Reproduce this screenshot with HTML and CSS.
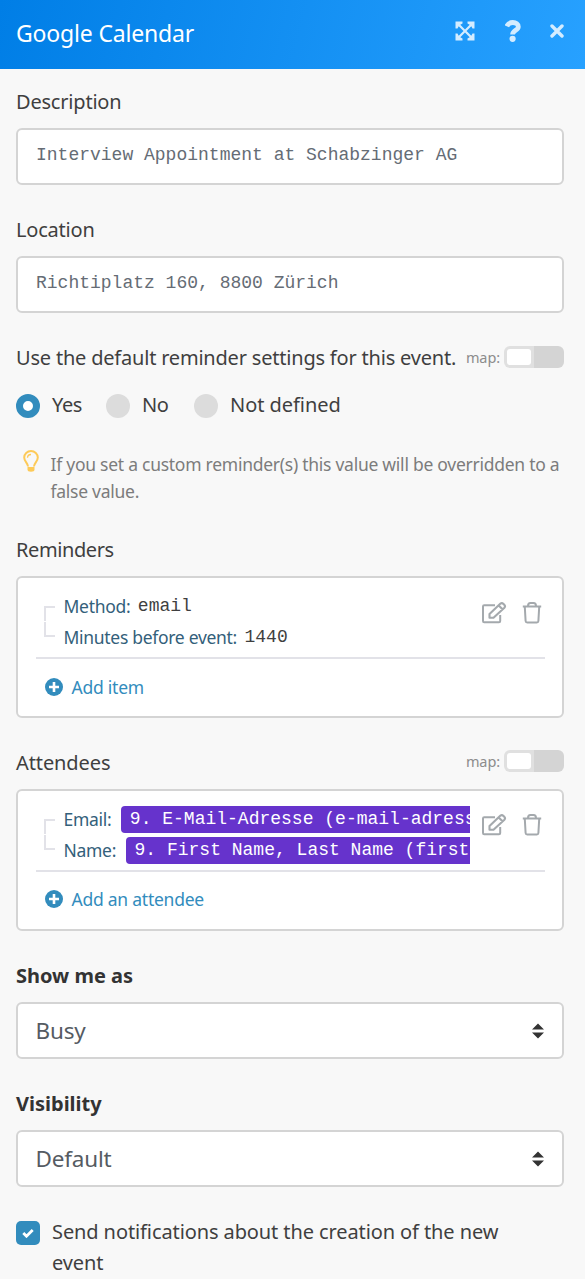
FILE: index.html
```html
<!DOCTYPE html>
<html lang="en">
<head>
<meta charset="utf-8">
<title>Google Calendar</title>
<link rel="stylesheet" href="styles.css">
</head>
<body>
<svg class="defs" width="0" height="0" aria-hidden="true">
  <symbol id="edit" viewBox="0 0 26 24">
    <path d="M14 4.200H3.200Q2 4.200 2 5.400V20Q2 21.200 3.200 21.200H18Q19.200 21.200 19.200 20V14" fill="none" stroke="currentColor" stroke-width="2"/>
    <path d="M8.500 16.800V13L19.500 2.600Q21 1.500 22.500 3L23.300 3.800Q24.700 5.300 23.400 6.700L12.500 16.800Z M17.700 4.500L21.500 8.300" fill="none" stroke="currentColor" stroke-width="2.100" stroke-linejoin="round"/>
  </symbol>
  <symbol id="trash" viewBox="0 0 20 24">
    <path d="M.8 5.500H19.200M6 5Q6 2 8.500 2H11.500Q14 2 14 5M2.800 6L3.600 20Q3.700 21.500 5.200 21.500H14.800Q16.300 21.500 16.400 20L17.200 6" fill="none" stroke="currentColor" stroke-width="2"/>
  </symbol>
  <symbol id="plus" viewBox="0 0 18 18">
    <circle cx="9" cy="9" r="9" fill="currentColor"/>
    <path d="M9 4V14M4 9H14" stroke="#fff" stroke-width="2.600"/>
  </symbol>
  <symbol id="sort" viewBox="0 0 12 16">
    <path d="M6 .5L12 6.500H0ZM6 15.500L0 9.500H12Z" fill="#333"/>
  </symbol>
</svg>
<header class="header">
  <h1 class="title">Google Calendar</h1>
  <div class="actions">
    <svg class="expand" viewBox="0 0 20 20"><path d="M.5 .5H7.500V2.500L5.300 3.700L10 8.500L14.700 3.700L12.500 2.500V.5H19.500V7.500H17.500L16.300 5.300L11.500 10L16.300 14.700L17.500 12.500H19.500V19.500H12.500V17.500L14.700 16.300L10 11.500L5.300 16.300L7.500 17.500V19.500H.5V12.500H2.500L3.700 14.700L8.500 10L3.700 5.300L2.500 7.500H.5Z" fill="currentColor"/></svg>
    <svg class="help" viewBox="0 0 16 22"><path d="M1.800 6.300C2.900 3.700 5 2.500 7.900 2.500C11 2.500 13.300 4.200 13.300 6.700C13.300 10.300 7.600 10.300 7.600 14.500" fill="none" stroke="currentColor" stroke-width="4.800"/><circle cx="7.600" cy="18.800" r="3.100" fill="currentColor"/></svg>
    <svg class="close" viewBox="0 0 14 14"><path d="M2 2L12 12M12 2L2 12" stroke="currentColor" stroke-width="3.400" stroke-linecap="round"/></svg>
  </div>
</header>
<main class="form">
  <section class="field">
    <div class="label"><span class="t-description">Description</span></div>
    <div class="box input">Interview Appointment at Schabzinger AG</div>
  </section>
  <section class="field">
    <div class="label"><span class="t-location">Location</span></div>
    <div class="box input">Richtiplatz 160, 8800 Zürich</div>
  </section>
  <section class="reminder-default">
    <div class="label"><span class="t-use">Use the default reminder settings for this event.</span><span class="map"><span class="t-map">map:</span><i class="toggle"></i></span></div>
    <div class="radios">
      <span class="radio on"></span><span class="radio-text yes">Yes</span>
      <span class="radio"></span><span class="radio-text no">No</span>
      <span class="radio"></span><span class="radio-text nd">Not defined</span>
    </div>
    <div class="hint">
      <svg class="bulb" viewBox="0 0 16 22"><path d="M5 16.500C5 13 1.200 11.500 1.200 7.500A6.800 6.500 0 0 1 14.800 7.500C14.800 11.500 11 13 11 16.500" fill="none" stroke="currentColor" stroke-width="2"/><path d="M4.500 7.800Q4.600 4.700 8 4.500" fill="none" stroke="currentColor" stroke-width="1.300"/><path d="M4.500 17H11.500V19.500Q11.500 21.700 8 21.700T4.500 19.500Z" fill="currentColor"/></svg>
      <p class="hint-text">If you set a custom reminder(s) this value will be overridden to a<br>false value.</p>
    </div>
  </section>
  <section class="field">
    <div class="label"><span class="t-reminders">Reminders</span></div>
    <div class="box list">
      <div class="item">
        <div class="rows">
          <div class="row first"><i class="branch"></i><span class="key t-method">Method:</span><span class="value">email</span></div>
          <div class="row last"><i class="branch"></i><span class="key t-minutes">Minutes before event:</span><span class="value">1440</span></div>
        </div>
        <div class="tools"><svg class="edit"><use href="#edit"/></svg><svg class="trash"><use href="#trash"/></svg></div>
      </div>
      <div class="add"><svg class="plus"><use href="#plus"/></svg><span class="t-additem">Add item</span></div>
    </div>
  </section>
  <section class="field attendees">
    <div class="label"><span class="t-attendees">Attendees</span><span class="map"><span class="t-map">map:</span><i class="toggle"></i></span></div>
    <div class="box list">
      <div class="item">
        <div class="rows">
          <div class="row first"><i class="branch"></i><span class="key t-email">Email:</span><span class="chip">9. E-Mail-Adresse (e-mail-adresse)</span></div>
          <div class="row last"><i class="branch"></i><span class="key t-name">Name:</span><span class="chip">9. First Name, Last Name (first name)</span></div>
        </div>
        <div class="tools"><svg class="edit"><use href="#edit"/></svg><svg class="trash"><use href="#trash"/></svg></div>
      </div>
      <div class="add"><svg class="plus"><use href="#plus"/></svg><span class="t-addatt">Add an attendee</span></div>
    </div>
  </section>
  <section class="field">
    <div class="label strong"><span class="t-show">Show me as</span></div>
    <div class="box select"><span class="t-busy">Busy</span><svg class="sort"><use href="#sort"/></svg></div>
  </section>
  <section class="field">
    <div class="label strong"><span class="t-vis">Visibility</span></div>
    <div class="box select"><span class="t-default">Default</span><svg class="sort"><use href="#sort"/></svg></div>
  </section>
  <section class="notify">
    <span class="checkbox"><svg viewBox="0 0 12 10"><path d="M1.300 5L4.500 8.200L10.700 2" fill="none" stroke="#fff" stroke-width="2.800"/></svg></span>
    <p class="notify-text">Send notifications about the creation of the new<br>event</p>
  </section>
</main>
</body>
</html>
```
FILE: styles.css
```css
* { box-sizing: border-box; }
body { margin: 0; background: #f8f8f8; color: #3f3f3f; font: 20px/30px "Noto Sans", sans-serif; white-space: nowrap; }
h1, p { margin: 0; font-weight: inherit; font-size: inherit; }
svg { display: block; flex: none; }
.defs { position: absolute; }
.header { height: 69px; padding: 0 21px 0 16px; display: flex; justify-content: space-between; background: linear-gradient(105deg, #007ee6, #27a1ff); color: #fff; }
.title { font-size: 23px; line-height: 67px; letter-spacing: -0.17px; }
.actions { display: flex; align-items: center; height: 62px; color: #d4ecff; }
.expand { width: 20px; height: 20px; margin-right: 30px; }
.help { width: 16px; height: 22px; margin-right: 29px; }
.close { width: 14px; height: 14px; }
.form { height: 1210px; overflow: hidden; padding: 18px 21px 0 16px; }
.field { margin-bottom: 30px; }
.label { height: 30px; margin-bottom: 11px; display: flex; justify-content: space-between; letter-spacing: -0.2px; }
.radio-text { letter-spacing: -0.4px; }
.radio-text.nd { letter-spacing: -0.05px; }
.t-reminders { letter-spacing: -0.4px; }
.t-attendees { letter-spacing: -0.1px; }
.strong { font-weight: 700; color: #333; letter-spacing: 0; }
.box { background: #fff; border: 2px solid #d4d4d4; border-radius: 6px; }
.input { height: 57px; padding: 0 18px; color: #656c75; font: 18px/50px "Liberation Mono", monospace; }
.map { height: 28px; display: flex; align-items: center; font-size: 14.500px; color: #8c8c8c; letter-spacing: -0.1px; }
.attendees .map { height: 26px; }
.toggle { width: 60px; height: 22px; margin-left: 4px; padding: 3px; border-radius: 6px; background: linear-gradient(90deg, #e0e0e0 30px, #d4d4d4 30px); }
.toggle::before { content: ""; display: block; width: 24px; height: 16px; border-radius: 3px; background: #fff; }
.radios { height: 24px; margin: 21px 0 33px; display: flex; align-items: center; }
.radio { width: 24px; height: 24px; margin-right: 12px; border-radius: 50%; background: #dcdcdc; }
.radio.on { border: 7.500px solid #328cbd; background: #fff; }
.radio-text { line-height: 24px; padding-bottom: 2px; }
.yes { width: 54px; }
.no { width: 52px; }
.hint { display: flex; margin-bottom: 30px; }
.bulb { width: 16px; height: 22px; margin: -1px 11.500px 0 7px; color: #fdca58; }
.hint-text { font-size: 17.500px; line-height: 27px; color: #7c7c7c; letter-spacing: -0.26px; }
.list { height: 142px; padding: 13px 17px 0 18px; }
.item { height: 68px; border-bottom: 2px solid #e2e2e8; display: flex; justify-content: space-between; }
.rows { width: 434px; overflow: hidden; }
.row { height: 31px; display: flex; align-items: center; }
.branch { width: 11px; height: 15px; margin: 0 8.500px 0 8px; border-left: 2px solid #e2e2e8; flex: none; }
.first .branch { align-self: flex-end; margin-bottom: 1px; border-top: 2px solid #e2e2e8; }
.last .branch { align-self: flex-start; border-bottom: 2px solid #e2e2e8; }
.key { padding-bottom: 2px; color: #33607a; font-size: 17.500px; letter-spacing: -0.3px; flex: none; }
.value { margin-left: 7.500px; padding-bottom: 1px; color: #3f3f3f; font: 18px/30px "Liberation Mono", monospace; }
.chip { height: 27px; margin-left: 9.500px; padding: 0 9px; border-radius: 4px; background: #6633cc; color: #fff; font: 18px/26px "Liberation Mono", monospace; flex: none; }
.tools { display: flex; color: #a4a9ad; padding-top: 10px; }
.attendees .tools { padding-top: 9px; }
.edit { width: 26px; height: 24px; margin-right: 15px; }
.trash { width: 20px; height: 24px; margin-right: 3px; }
.add { height: 56px; padding-left: 9px; display: flex; align-items: center; color: #328cbd; font-size: 17.500px; letter-spacing: -0.24px; }
.attendees .add { height: 54px; }
.add span { padding-bottom: 1px; }
.plus { width: 18px; height: 18px; margin-right: 8.500px; }
.select { height: 57px; padding: 0 18px; display: flex; align-items: center; justify-content: space-between; color: #555b62; font-size: 22.500px; letter-spacing: -0.2px; }
.select span { margin-left: -0.5px; padding-top: 1px; }
.sort { width: 12px; height: 16px; }
.notify { display: flex; }
.checkbox { width: 24px; height: 24px; margin: 4px 12px 0 0; border-radius: 5px; background: #328cbd; display: flex; align-items: center; justify-content: center; }
.checkbox svg { width: 12px; height: 10px; }
.notify-text { margin-top: -1px; line-height: 31px; letter-spacing: -0.1px; }
```
